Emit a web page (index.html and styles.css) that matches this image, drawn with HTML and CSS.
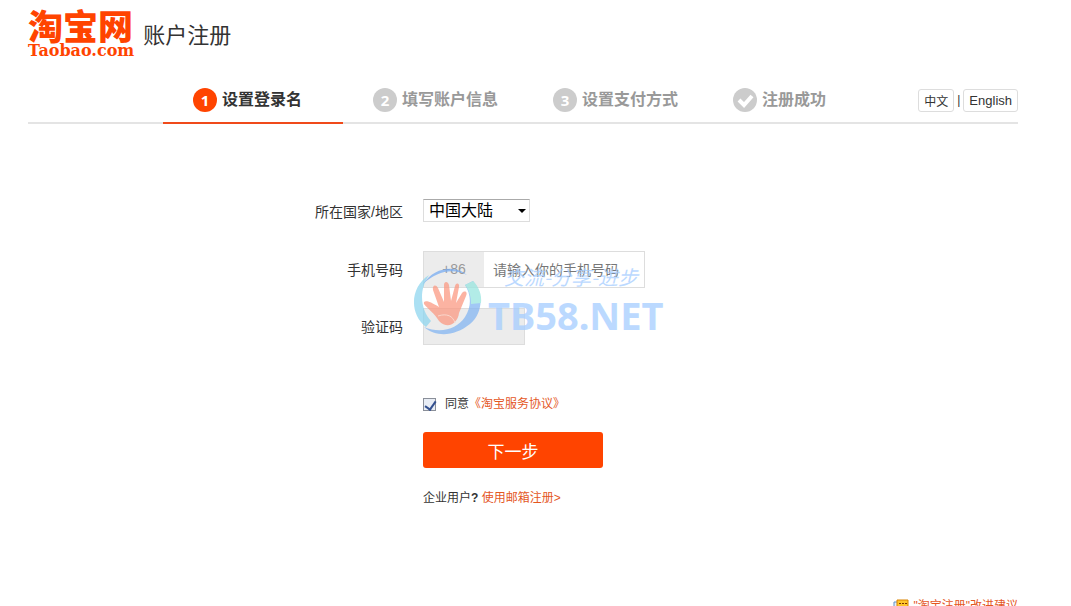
FILE: index.html
```html
<!DOCTYPE html>
<html lang="zh-CN">
<head>
    <meta charset="UTF-8">
    <meta name="viewport" content="width=device-width, initial-scale=1.0">
    <title>账户注册</title>
    <link rel="stylesheet" href="styles.css">
</head>
<body>
    <div class="page">
        <div class="header">
            <a href="#" class="logo">
                <span class="logo-cn">淘宝网</span>
                <span class="logo-en">Taobao.com</span>
            </a>
            <h1>账户注册</h1>
        </div>

        <div class="steps-bar">
            <ol class="steps">
                <li class="active"><span class="num">1</span>设置登录名</li>
                <li><span class="num">2</span>填写账户信息</li>
                <li><span class="num">3</span>设置支付方式</li>
                <li>
                    <svg class="num" viewBox="0 0 24 24"><path d="M6 12l5 5 8-9" fill="none" stroke="#fff" stroke-width="4"/></svg>注册成功
                </li>
            </ol>
            <div class="lang">
                <button type="button" class="cn">中文</button>
                <span>|</span>
                <button type="button">English</button>
            </div>
        </div>

        <form class="form">
            <div class="row country-row">
                <label for="country">所在国家/地区</label>
                <div class="select-box">
                    <select id="country">
                        <option>中国大陆</option>
                    </select>
                </div>
            </div>
            <div class="row">
                <label for="phone">手机号码</label>
                <div class="phone">
                    <span class="code">+86</span>
                    <input type="tel" id="phone" placeholder="请输入你的手机号码">
                </div>
            </div>
            <div class="row">
                <label for="captcha">验证码</label>
                <input type="text" id="captcha" class="captcha" disabled>
            </div>

            <div class="actions">
                <div class="agree">
                    <input type="checkbox" id="agree" checked>
                    <label for="agree">同意</label><a href="#">《淘宝服务协议》</a>
                </div>
                <button type="submit" class="next">下一步</button>
                <p class="company">企业用户<b>?</b> <a href="#">使用邮箱注册&gt;</a></p>
            </div>

            <div class="watermark">
                <svg class="hand" viewBox="0 0 70 70">
                    <path d="M16 8C-3 20-4 47 13 60L18 54C8 43 5 24 16 8Z" fill="#8fd6ef"/>
                    <path d="M10 17C22-1 43-2 54 8C40 1 24 4 10 17Z" fill="#79adf2"/>
                    <path d="M60 14C71 26 70 46 57 57C42 69 24 71 11 60C28 67 44 62 52 50C59 39 58 27 52 18Z" fill="#84b6f2"/>
                    <path d="M60 14C66 20 69 28 68 36L58 37C58 29 56 23 52 18Z" fill="#99e6df"/>
                    <path d="M26 54C22 47 15 42 11 37C10 33 15 33 26 40L20 23C19 18 23 17 25 21L31 35L31 18C31 14 35 14 36 18L38 34L42 19C43 15 47 16 46 20L43 36L49 26C52 23 55 25 53 29L46 46C45 56 35 63 26 54Z" fill="#fb9a83"/>
                    <path d="M25 49C34 46 40 49 42 56" fill="none" stroke="#ffd0c2"/>
                </svg>
                <div class="mark-text">
                    <span class="slogan">交流-分享-进步</span>
                    <span class="site">TB58.NET</span>
                </div>
            </div>
        </form>

        <div class="feedback">
            <svg viewBox="0 0 16 14"><path d="M1 3h9v10H1z" fill="#e6f0fb" stroke="#5d8fca"/><path d="M4 1h11v7H9l-2 3V8H4z" fill="#ffc62b" stroke="#d98200"/><path d="M6 4h2v1H6zM9 4h2v1H9zM12 4h2v1h-2z" fill="#7a3300"/></svg>
            <a href="#">"淘宝注册"改进建议</a>
        </div>
    </div>
</body>
</html>
```

FILE: styles.css
```css
* {
    box-sizing: border-box;
}
body {
    margin: 0;
    padding: 0 25px 0 0;
    background: #fff;
    color: #333;
    font: 12px/20px "Liberation Sans", "Noto Sans CJK SC", sans-serif;
}
a {
    color: #e4571f;
    text-decoration: none;
}
button, input, select {
    font-family: inherit;
}
.page {
    max-width: 990px;
    margin: 0 auto;
}

/* header */
.header {
    display: flex;
    align-items: center;
    gap: 9px;
    height: 78px;
    padding-bottom: 6px;
}
.logo {
    display: flex;
    flex-direction: column;
    color: #ff4400;
}
.logo-cn {
    font-size: 35px;
    font-weight: 900;
    line-height: 30px;
}
.logo-en {
    font: bold 16px/16px "DejaVu Serif", serif;
}
.header h1 {
    margin: 0;
    font-size: 22px;
    font-weight: 400;
}

/* steps */
.steps-bar {
    display: flex;
    justify-content: space-between;
    height: 46px;
    padding-left: 135px;
    border-bottom: 2px solid #e4e4e4;
}
.steps {
    display: flex;
    margin: 0;
    padding: 0;
    list-style: none;
}
.steps li {
    display: flex;
    align-items: center;
    gap: 5px;
    width: 180px;
    height: 46px;
    padding-left: 30px;
    border-bottom: 2px solid #e4e4e4;
    color: #999;
    font-size: 16px;
    font-weight: 700;
}
.steps .num {
    width: 24px;
    height: 24px;
    border-radius: 50%;
    background: #ccc;
    color: #fff;
    font: bold 15px/24px "Open Sans", sans-serif;
    text-align: center;
}
.steps .active {
    border-color: #f04a1a;
    color: #333;
}
.steps .active .num {
    background: #ff4400;
}
.lang {
    display: flex;
    align-items: center;
    gap: 3px;
}
.lang button {
    height: 23px;
    padding: 0 5px;
    border: 1px solid #ddd;
    border-radius: 3px;
    background: #fff;
    color: #333;
    font-size: 13px;
}
.lang .cn {
    font-size: 12px;
}

/* form */
.form {
    position: relative;
    padding-top: 68px;
}
.row {
    display: flex;
    align-items: center;
    gap: 20px;
    height: 37px;
    margin-bottom: 20px;
}
.row label {
    width: 375px;
    font-size: 14px;
    text-align: right;
}
.country-row {
    height: 39px;
}
.select-box {
    position: relative;
    margin-bottom: 2px;
}
.select-box::after {
    content: "";
    position: absolute;
    top: 10px;
    right: 4px;
    border: 4px solid transparent;
    border-top-color: #000;
    border-bottom: 0;
}
.select-box select {
    display: block;
    width: 107px;
    height: 23px;
    padding: 0 5px;
    border: 1px solid #ddd;
    border-top-color: #aaa;
    background: #fff;
    color: #000;
    font-size: 16px;
    appearance: none;
}
.phone {
    display: flex;
    width: 222px;
    height: 37px;
    border: 1px solid #ddd;
}
.code {
    width: 60px;
    background: #ececec;
    color: #999;
    font-size: 14px;
    line-height: 35px;
    text-align: center;
}
.phone input {
    flex: 1;
    min-width: 0;
    padding: 0 9px;
    border: 0;
    font-size: 14px;
}
.phone input::placeholder {
    color: #777;
}
.captcha {
    width: 102px;
    height: 37px;
    border: 1px solid #ddd;
    background: #ececec;
}
.actions {
    padding: 29px 0 0 395px;
}
.agree {
    display: flex;
    align-items: center;
}
.agree input {
    appearance: none;
    width: 13px;
    height: 13px;
    margin: 0 9px 0 0;
    border: 1px solid #8a8f99;
    background: #e8edf5;
}
.agree input:checked::after {
    content: "";
    display: block;
    width: 5px;
    height: 9px;
    margin: 0 0 0 3px;
    border: solid #33508f;
    border-width: 0 2px 2px 0;
    transform: rotate(35deg);
}
.next {
    display: block;
    width: 180px;
    height: 36px;
    margin: 18px 0 20px;
    border: 0;
    border-radius: 3px;
    background: #ff4400;
    color: #fff;
    font-size: 17px;
}
.company {
    margin: 0;
}

/* watermark over the fields */
.watermark {
    position: absolute;
    top: 143px;
    left: 385px;
    display: flex;
    gap: 5px;
    opacity: 0.75;
    pointer-events: none;
}
.hand {
    width: 70px;
    height: 70px;
}
.mark-text {
    display: flex;
    flex-direction: column;
    color: #a5cdff;
}
.slogan {
    padding-left: 16px;
    font-family: "Noto Sans CJK SC", sans-serif;
    font-size: 20px;
    font-style: italic;
    line-height: 20px;
}
.site {
    font: bold 38px/56px "Noto Sans", sans-serif;
}

/* feedback */
.feedback {
    display: flex;
    justify-content: flex-end;
    align-items: center;
    gap: 4px;
    margin-top: 88px;
}
.feedback svg {
    width: 16px;
    height: 14px;
}
```
